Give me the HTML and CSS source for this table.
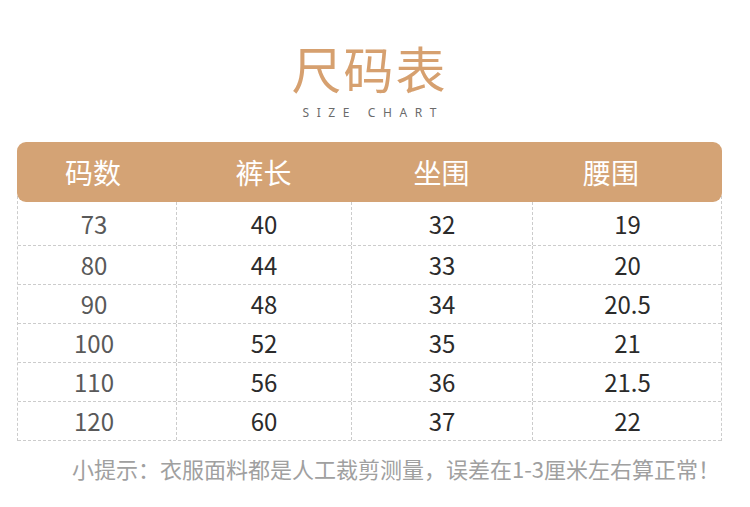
FILE: index.html
```html
<!DOCTYPE html>
<html lang="zh">
<head>
<meta charset="utf-8">
<title>尺码表</title>
<link rel="stylesheet" href="styles.css">
</head>
<body>
<div class="page">
  <header class="title-block">
    <h1 class="title">尺码表</h1>
    <p class="subtitle">SIZE CHART</p>
  </header>
  <div class="chart">
    <div class="head">
      <div class="hcell c1">码数</div>
      <div class="hcell c2">裤长</div>
      <div class="hcell c3">坐围</div>
      <div class="hcell c4">腰围</div>
    </div>
    <div class="body">
      <div class="row first"><div class="cell c1">73</div><div class="cell c2">40</div><div class="cell c3">32</div><div class="cell c4">19</div></div>
      <div class="row"><div class="cell c1">80</div><div class="cell c2">44</div><div class="cell c3">33</div><div class="cell c4">20</div></div>
      <div class="row"><div class="cell c1">90</div><div class="cell c2">48</div><div class="cell c3">34</div><div class="cell c4">20.5</div></div>
      <div class="row"><div class="cell c1">100</div><div class="cell c2">52</div><div class="cell c3">35</div><div class="cell c4">21</div></div>
      <div class="row"><div class="cell c1">110</div><div class="cell c2">56</div><div class="cell c3">36</div><div class="cell c4">21.5</div></div>
      <div class="row"><div class="cell c1">120</div><div class="cell c2">60</div><div class="cell c3">37</div><div class="cell c4">22</div></div>
    </div>
  </div>
  <p class="note">小提示：衣服面料都是人工裁剪测量，误差在1-3厘米左右算正常！</p>
</div>
</body>
</html>
```

FILE: styles.css
```css
* { box-sizing: border-box; }
html, body { margin: 0; padding: 0; background: #ffffff; }
body {
  font-family: "Noto Sans CJK SC", "Noto Sans", sans-serif;
  width: 750px;
  height: 507px;
  overflow: hidden;
}
.page {
  padding: 0 28px 0 17px;
}
.title-block {
  display: flex;
  flex-direction: column;
  align-items: center;
  padding-top: 42px;
}
.title {
  margin: 0;
  font-size: 50px;
  line-height: 50px;
  font-weight: 400;
  color: #d6a06f;
  letter-spacing: 2px;
}
.subtitle {
  margin: 14px -7.6px 0 0;
  font-family: "Noto Sans", sans-serif;
  font-size: 12px;
  line-height: 14px;
  letter-spacing: 7.6px;
  color: #6b6b6b;
}
.chart {
  margin-top: 22px;
}
.head {
  display: grid;
  grid-template-columns: 159px 175px 181px 190px;
  height: 60px;
  background: #d4a375;
  border-radius: 9px;
  position: relative;
  z-index: 1;
}
.hcell {
  display: flex;
  align-items: center;
  justify-content: center;
  color: #ffffff;
  font-size: 28px;
  line-height: 1;
}
.hcell.c1 { padding-right: 7px; }
.hcell.c4 { padding-right: 32px; }
.body {
  border-left: 1px dashed #cccccc;
  border-right: 1px dashed #cccccc;
  margin-top: -6px;
}
.row {
  display: grid;
  grid-template-columns: 158px 175px 181px 190px;
  height: 39px;
  border-bottom: 1px dashed #cccccc;
}
.row.first { height: 50px; padding-top: 6px; }
.cell {
  display: flex;
  align-items: center;
  justify-content: center;
  font-size: 24px;
  line-height: 1;
  color: #2b2b2b;
}
.cell.c1 { color: #595959; padding-right: 6px; }
.cell.c2, .cell.c3, .cell.c4 { border-left: 1px dashed #cccccc; }
.note {
  margin: 12px 0 0 55px;
  font-size: 22px;
  line-height: 30px;
  color: #a0a0a0;
  white-space: nowrap;
}
```
